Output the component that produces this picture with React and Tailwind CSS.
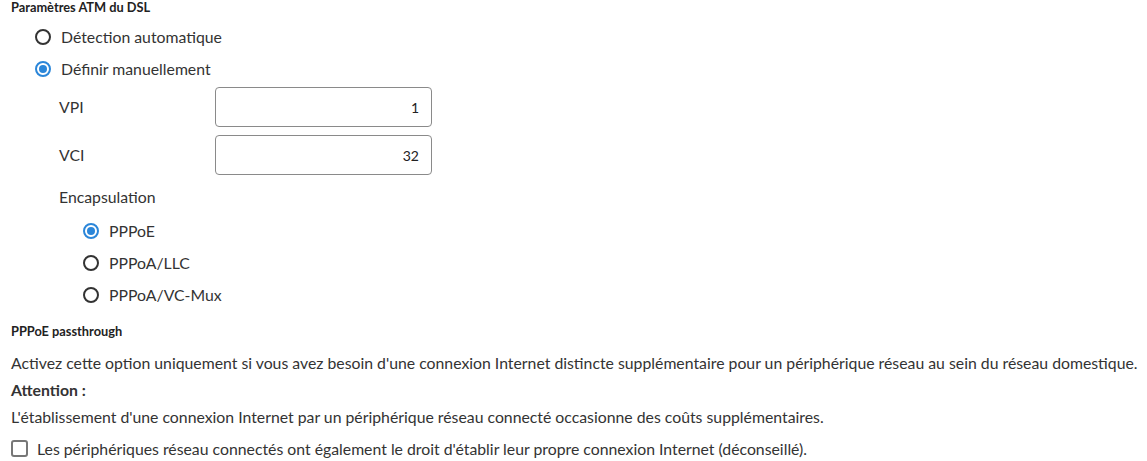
import { useState } from 'react';

function Radio({ checked, label, onClick }) {
  return (
    <label className="flex items-center h-8 gap-[10px] cursor-pointer" onClick={onClick}>
      <span className="w-4 h-4 rounded-full border-2 border-[#333] flex items-center justify-center shrink-0 data-[on=true]:border-[#2b86d9]" data-on={checked}>
        {checked && <span className="w-2 h-2 rounded-full bg-[#2b86d9]" />}
      </span>
      <span>{label}</span>
    </label>
  );
}

export default function App() {
  const [mode, setMode] = useState('manual');
  const [encap, setEncap] = useState('pppoe');
  const [pass, setPass] = useState(false);

  return (
    <div className="w-[1147px] h-[461px] bg-white text-[#333] text-[15.8px] font-['Lato','Liberation_Sans',sans-serif] overflow-hidden">
      {/* ATM settings */}
      <div className="pl-[11px]">
        <h3 className="text-[12.8px] font-bold text-[#222] leading-[14px]">Paramètres ATM du DSL</h3>
        <div className="pl-[24px] pt-[7px]">
          <Radio checked={mode === 'auto'} label="Détection automatique" onClick={() => setMode('auto')} />
          <Radio checked={mode === 'manual'} label="Définir manuellement" onClick={() => setMode('manual')} />
        </div>
        <div className="pl-[48px] pt-[2px]">
          <div className="flex items-center h-10 mb-[8px]">
            <span className="w-[156px]">VPI</span>
            <input className="w-[217px] h-10 border border-[#8a8a8a] rounded-[4px] text-right px-3 text-[14px] text-[#222] outline-none" defaultValue="1" />
          </div>
          <div className="flex items-center h-10">
            <span className="w-[156px]">VCI</span>
            <input className="w-[217px] h-10 border border-[#8a8a8a] rounded-[4px] text-right px-3 text-[14px] text-[#222] outline-none" defaultValue="32" />
          </div>
          <div className="pt-[11px] leading-[22px]">Encapsulation</div>
          <div className="pl-[24px] pt-[7px]">
            <Radio checked={encap === 'pppoe'} label="PPPoE" onClick={() => setEncap('pppoe')} />
            <Radio checked={encap === 'llc'} label="PPPoA/LLC" onClick={() => setEncap('llc')} />
            <Radio checked={encap === 'vc'} label="PPPoA/VC-Mux" onClick={() => setEncap('vc')} />
          </div>
        </div>

        {/* PPPoE passthrough */}
        <h3 className="text-[12.8px] font-bold text-[#222] leading-[14px] pt-[13px]">PPPoE passthrough</h3>
        <p className="pt-[15px] leading-[20px]">
          Activez cette option uniquement si vous avez besoin d'une connexion Internet distincte supplémentaire pour un périphérique réseau au sein du réseau domestique.
        </p>
        <p className="font-bold leading-[20px] pt-[7px]">Attention :</p>
        <p className="leading-[20px] pt-[7px]">
          L'établissement d'une connexion Internet par un périphérique réseau connecté occasionne des coûts supplémentaires.
        </p>
        <label className="flex items-center gap-[9px] pt-[10px] cursor-pointer" onClick={() => setPass(!pass)}>
          <span className="w-[17px] h-[17px] border-2 border-[#777] rounded-[3px] shrink-0 flex items-center justify-center">
            {pass && <span className="w-2 h-2 bg-[#2b86d9]" />}
          </span>
          <span>Les périphériques réseau connectés ont également le droit d'établir leur propre connexion Internet (déconseillé).</span>
        </label>
      </div>
    </div>
  );
}
